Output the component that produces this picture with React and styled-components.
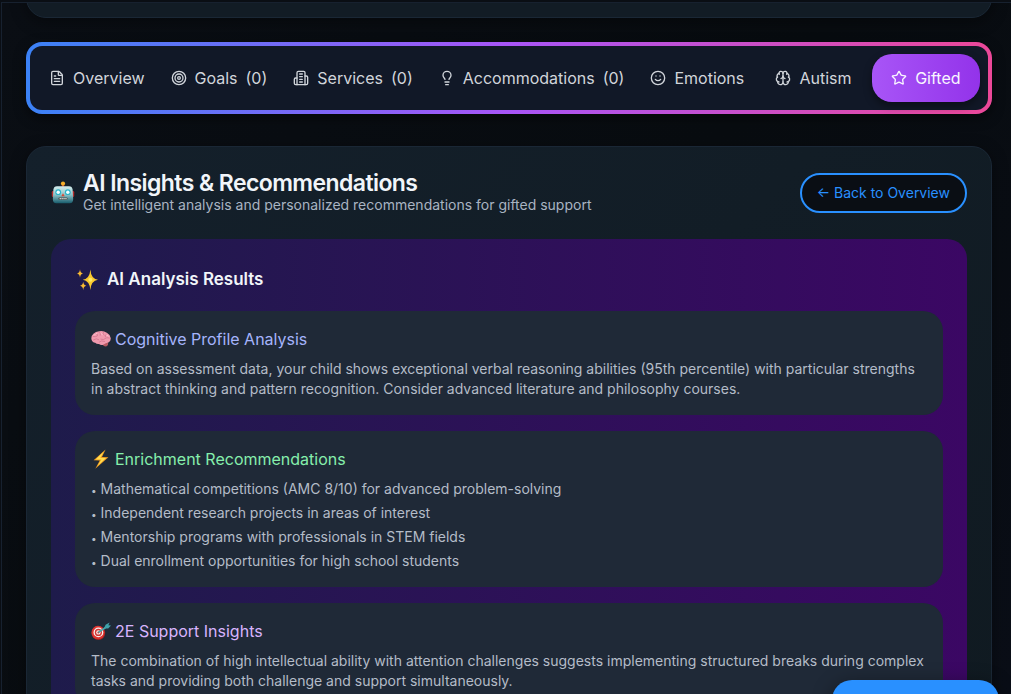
import React from 'react';
import styled, { createGlobalStyle, css } from 'styled-components';
import { FileText, Target, Lightbulb, Smile, Brain, Star } from 'lucide-react';

const GlobalStyle = createGlobalStyle`
  *, *::before, *::after { box-sizing: border-box; }
  body {
    margin: 0;
    background: #0a0e14;
    color: #f1f5f9;
    font-family: Inter, "Liberation Sans", sans-serif;
    font-size: 16px;
  }
  h2, h3, h4, p, ul { margin: 0; padding: 0; }
`;

const Shell = styled.div`
  display: flex;
  height: 100vh;
  padding: 2px 0 0 1px;
  overflow: hidden;
`;

const Content = styled.main`
  flex: 1;
  min-width: 0;
  padding: 0 19px 24px 24px;
  border: solid #17212f;
  border-width: 1px 0 0 1px;
  background: linear-gradient(135deg, #0a0e14 0%, #080c10 50%, #0a0e17 100%);
  overflow-y: auto;
  scrollbar-width: none;
`;

const panel = css`
  border: 1px solid #1a2735;
  background: linear-gradient(135deg, #14202b 0%, #101a21 100%);
  box-shadow: 0 4px 16px rgba(0, 0, 0, 0.4);
`;

const PreviousCard = styled.section`
  ${panel}
  height: 48px;
  margin-top: -33px;
  border-radius: 20px;
  background: #121c25;
`;

const TabBar = styled.nav`
  display: flex;
  gap: 4px;
  margin: 24px 0 32px;
  padding: 8px;
  border: 4px solid transparent;
  border-radius: 16px;
  background:
    linear-gradient(#111827, #111827) padding-box,
    linear-gradient(90deg, #3b82f6, #a855f7 50%, #ec4899) border-box;
  box-shadow: 0 4px 12px rgba(0, 0, 0, 0.5);
`;

const Tab = styled.button`
  display: flex;
  flex: 1 0 0;
  align-items: center;
  justify-content: center;
  gap: 8px;
  height: 48px;
  padding: 0 11px;
  border: 0;
  border-radius: 20px;
  background: ${(p) => (p.$active ? 'linear-gradient(90deg, #a855f7, #9333ea)' : 'transparent')};
  box-shadow: ${(p) => (p.$active ? '0 4px 8px rgba(0, 0, 0, 0.4)' : 'none')};
  color: ${(p) => (p.$active ? '#f8f5ff' : '#d1d5db')};
  font: inherit;
  line-height: 24px;
  white-space: nowrap;
  cursor: pointer;
`;

const Card = styled.section`
  ${panel}
  padding: 24px;
  border-radius: 20px;
`;

const CardHeader = styled.header`
  display: flex;
  align-items: center;
  justify-content: space-between;
  margin-bottom: 24px;
`;

const HeaderLead = styled.div`
  display: flex;
  align-items: center;
  gap: 8px;
`;

const Title = styled.h2`
  font-size: 23px;
  font-weight: 600;
  line-height: 24px;
  letter-spacing: -0.025em;
`;

const Subtitle = styled.p`
  color: #a9b4c2;
  font-size: 14px;
  line-height: 20px;
`;

const BackButton = styled.button`
  height: 40px;
  padding: 0 15px;
  border: 2px solid #2990ff;
  border-radius: 20px;
  background: #0a0e14;
  color: #2990ff;
  font: inherit;
  font-size: 14px;
  line-height: 20px;
  white-space: nowrap;
  cursor: pointer;
`;

const Results = styled.section`
  display: flex;
  flex-direction: column;
  gap: 16px;
  padding: 24px;
  border-radius: 20px;
  background: linear-gradient(90deg, #1e1b4b, #3b0764);
`;

const ResultsTitle = styled.h3`
  display: flex;
  align-items: center;
  gap: 8px;
  font-size: 17px;
  font-weight: 600;
  line-height: 32px;
`;

const Insight = styled.article`
  padding: 16px;
  border-radius: 20px;
  background: #1f2937;
  color: #b4bcc8;
  font-size: 14px;
  line-height: 20px;
`;

const InsightTitle = styled.h4`
  display: flex;
  align-items: center;
  gap: 4px;
  margin-bottom: 8px;
  color: ${(p) => p.$color};
  font-size: 16px;
  font-weight: 400;
  line-height: 24px;
`;

const List = styled.ul`
  display: grid;
  gap: 4px;
  list-style: none;
`;

const Bullet = styled.span`
  font-size: 10px;
  line-height: 10px;
  vertical-align: middle;
`;

const FloatingButton = styled.button`
  position: fixed;
  right: 12px;
  bottom: -34px;
  width: 167px;
  height: 48px;
  border: 0;
  border-radius: 20px;
  background: #2990ff;
  box-shadow: 0 4px 20px rgba(0, 0, 0, 0.4);
`;

const Building = ({ size, ...rest }) => (
  <svg
    width={size}
    height={size}
    viewBox="0 0 24 24"
    fill="none"
    stroke="currentColor"
    strokeWidth="2"
    strokeLinecap="round"
    strokeLinejoin="round"
    {...rest}
  >
    <path d="M6 22V4a2 2 0 0 1 2-2h8a2 2 0 0 1 2 2v18Z" />
    <path d="M6 12H4a2 2 0 0 0-2 2v6a2 2 0 0 0 2 2h2" />
    <path d="M18 9h2a2 2 0 0 1 2 2v9a2 2 0 0 1-2 2h-2" />
    <path d="M10 6h4M10 10h4M10 14h4M10 18h4" />
  </svg>
);

const Robot = () => (
  <svg width="24" height="24" viewBox="0 0 24 24" aria-hidden="true">
    <defs>
      <linearGradient id="robot" x1="0" y1="0" x2="0" y2="1">
        <stop offset="0" stopColor="#d6eeee" />
        <stop offset="0.5" stopColor="#8fc3c8" />
        <stop offset="1" stopColor="#175c6c" />
      </linearGradient>
    </defs>
    <path d="M10.8 3h2.4v3h-2.4z" fill="#b53b2b" />
    <circle cx="12" cy="2.6" r="2.1" fill="#f4ae2b" />
    <rect x="0.8" y="10" width="2.6" height="6" rx="1.2" fill="#b52d2d" />
    <rect x="20.6" y="10" width="2.6" height="6" rx="1.2" fill="#b52d2d" />
    <path d="M6 5.2h12q3.2 0 3.6 3.4l.6 9.4q0 4.2-3.6 4.2H5.4q-3.6 0-3.6-4.2l.6-9.4Q2.8 5.2 6 5.2z" fill="url(#robot)" />
    <circle cx="7.2" cy="11.2" r="2.9" fill="#2bb4ca" />
    <circle cx="16.8" cy="11.2" r="2.9" fill="#2bb4ca" />
    <circle cx="7.2" cy="11.2" r="1.7" fill="#f4ffff" />
    <circle cx="16.8" cy="11.2" r="1.7" fill="#f4ffff" />
    <path d="M12 12.2l1.7 3h-3.4z" fill="#d84b35" />
    <rect x="7.4" y="16.4" width="9.2" height="2.4" rx="1.2" fill="#4c4a4a" />
    <path d="M8.6 17.6h7" stroke="#d8e0dc" strokeWidth="1.2" strokeDasharray="1.3 .6" />
  </svg>
);

const Sparkles = () => (
  <svg width="24" height="24" viewBox="0 0 24 24" aria-hidden="true">
    <path d="M15.4 2.5Q16 11.8 23 12.8Q16 13.8 15.4 23Q14.6 13.8 7.8 12.8Q14.6 11.8 15.4 2.5z" fill="#fbc92e" />
    <path d="M5 2.2Q5.3 6 8 6.5Q5.3 7 5 10.8Q4.6 7 2 6.5Q4.6 6 5 2.2z" fill="#f9ba32" />
    <path d="M8.2 14.8Q8.6 18.4 11.3 18.8Q8.6 19.3 8.2 23Q7.8 19.3 5 18.8Q7.8 18.4 8.2 14.8z" fill="#f9ba32" />
    <circle cx="15.4" cy="12.8" r="2" fill="#ffe967" />
  </svg>
);

const BrainEmoji = () => (
  <svg width="20" height="20" viewBox="0 0 20 20" aria-hidden="true">
    <path d="M11 14.5q1.5 3.4 4.6 2.8 2-.8 1.6-4z" fill="#b85a63" />
    <path d="M.5 10.6Q-.2 7.2 2.4 4.8Q4.8 2 8.6 2.2Q12.6 1.6 15.8 3.8Q19.2 5.6 19.7 9Q20 12.4 17.4 13.6Q14.6 14.2 12.6 15.4Q10.2 16.6 8 15Q5.6 15.2 4.2 13.8Q1.2 13.6 .5 10.6z" fill="#f09aae" />
    <path d="M4 4.8Q7 4 6.3 7Q4.5 8.2 2.2 7.5M8.4 3.4q1.6 1 .9 2.8M12.4 3.4q-1.6 1.6.8 2.7M15.8 5q-2.4.8-1.5 2.9M18.2 9q-2.7-1-4 .6t-4.3.6M2.5 10.8q3-2 5.3-.2M8.2 13q2-2 5.4-.6" fill="none" stroke="#cf7089" strokeWidth="0.7" strokeLinecap="round" />
    <path d="M3.2 6.1q1-1.6 2.5-1.7M10 4.5l1.3 1M15.7 6q1.4.2 1.8 1.1" fill="none" stroke="#ffd0d9" strokeWidth="0.8" strokeLinecap="round" />
  </svg>
);

const Bolt = () => (
  <svg width="20" height="20" viewBox="0 0 20 20" aria-hidden="true">
    <path d="M14.6 .4L2.6 11.2l6.2.2-4.5 8.4L17.4 8.2l-6.4-.1z" fill="#f29d20" />
    <path d="M12.8 2.6L4.6 10.4l5.8.1-3.9 6.4 8.6-7.8-5.8-.2z" fill="#ffdd50" />
  </svg>
);

const Dart = () => (
  <svg width="20" height="20" viewBox="0 0 20 20" aria-hidden="true">
    <ellipse cx="7.4" cy="12" rx="6.8" ry="7" fill="#a91f20" />
    <ellipse cx="7" cy="11.4" rx="6.5" ry="6.7" fill="#dc3430" />
    <circle cx="7.4" cy="11.4" r="4.9" fill="#f8eeee" />
    <circle cx="7.4" cy="11.4" r="3.6" fill="#d23634" />
    <circle cx="7.4" cy="11.4" r="2.2" fill="#fff0ed" />
    <circle cx="7.4" cy="11.4" r="1" fill="#c5302f" />
    <path d="M7.5 11.4L15 6.2" stroke="#49a7ac" strokeWidth="1.7" />
    <path d="M13 7.2L14.6 3.8 18.6 1.4 17.4 4.2 20 4.6 17.2 7.4z" fill="#3fa2ab" />
  </svg>
);

const TABS = [
  { label: 'Overview', icon: FileText },
  { label: 'Goals', icon: Target, count: 0 },
  { label: 'Services', icon: Building, count: 0 },
  { label: 'Accommodations', icon: Lightbulb, count: 0 },
  { label: 'Emotions', icon: Smile },
  { label: 'Autism', icon: Brain },
  { label: 'Gifted', icon: Star, active: true },
];

const RECOMMENDATIONS = [
  'Mathematical competitions (AMC 8/10) for advanced problem-solving',
  'Independent research projects in areas of interest',
  'Mentorship programs with professionals in STEM fields',
  'Dual enrollment opportunities for high school students',
];

export default function App() {
  return (
    <>
      <GlobalStyle />
      <Shell>
        <Content>
          <PreviousCard />
          <TabBar aria-label="Student profile">
            {TABS.map(({ label, icon: Icon, count, active }) => (
              <Tab key={label} type="button" $active={active} aria-current={active ? 'page' : undefined}>
                <Icon size={16} aria-hidden="true" />
                <span>{label}</span>
                {count !== undefined && <span>({count})</span>}
              </Tab>
            ))}
          </TabBar>
          <Card>
            <CardHeader>
              <HeaderLead>
                <Robot />
                <div>
                  <Title>AI Insights &amp; Recommendations</Title>
                  <Subtitle>Get intelligent analysis and personalized recommendations for gifted support</Subtitle>
                </div>
              </HeaderLead>
              <BackButton type="button">← Back to Overview</BackButton>
            </CardHeader>
            <Results>
              <ResultsTitle><Sparkles />AI Analysis Results</ResultsTitle>
              <Insight>
                <InsightTitle $color="#a5b4fc"><BrainEmoji />Cognitive Profile Analysis</InsightTitle>
                <p>Based on assessment data, your child shows exceptional verbal reasoning abilities (95th percentile) with particular strengths in abstract thinking and pattern recognition. Consider advanced literature and philosophy courses.</p>
              </Insight>
              <Insight>
                <InsightTitle $color="#86efac"><Bolt />Enrichment Recommendations</InsightTitle>
                <List>
                  {RECOMMENDATIONS.map((item) => <li key={item}><Bullet>•</Bullet> {item}</li>)}
                </List>
              </Insight>
              <Insight>
                <InsightTitle $color="#d8b4fe"><Dart />2E Support Insights</InsightTitle>
                <p>The combination of high intellectual ability with attention challenges suggests implementing structured breaks during complex tasks and providing both challenge and support simultaneously.</p>
              </Insight>
            </Results>
          </Card>
        </Content>
      </Shell>
      <FloatingButton type="button" aria-label="Open assistant" />
    </>
  );
}
